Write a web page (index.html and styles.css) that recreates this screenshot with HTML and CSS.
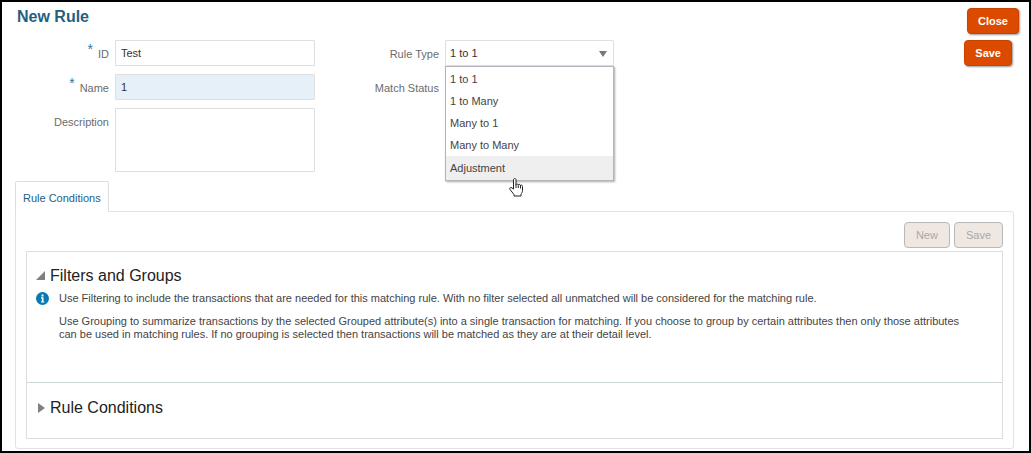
FILE: index.html
```html
<!DOCTYPE html>
<html lang="en">
<head>
<meta charset="utf-8">
<meta name="viewport" content="width=device-width, initial-scale=1">
<title>New Rule</title>
<link rel="stylesheet" href="styles.css">
</head>
<body>
<main class="page">
  <header class="page-header">
    <h1 class="page-title">New Rule</h1>
    <button class="btn btn-primary" type="button">Close</button>
  </header>

  <form class="rule-form">
    <div class="fields">
      <label class="label" for="rule-id"><span class="required">*</span> ID</label>
      <input class="control" id="rule-id" type="text" value="Test">
      <label class="label" for="rule-name"><span class="required">*</span> Name</label>
      <input class="control control-active" id="rule-name" type="text" value="1">
      <label class="label" for="rule-desc">Description</label>
      <textarea class="control control-area" id="rule-desc"></textarea>
    </div>
    <div class="fields fields-type">
      <label class="label" for="rule-type">Rule Type</label>
      <div class="select-wrap">
        <select class="control control-select" id="rule-type">
          <option selected>1 to 1</option>
          <option>1 to Many</option>
          <option>Many to 1</option>
          <option>Many to Many</option>
          <option>Adjustment</option>
        </select>
        <svg class="select-arrow" viewBox="0 0 8 6" aria-hidden="true"><path d="M0 0h8L4 6z"/></svg>
        <ul class="menu" role="listbox" aria-label="Rule Type">
          <li class="menu-item" role="option">1 to 1</li>
          <li class="menu-item" role="option">1 to Many</li>
          <li class="menu-item" role="option">Many to 1</li>
          <li class="menu-item" role="option">Many to Many</li>
          <li class="menu-item menu-item-hover" role="option">Adjustment</li>
        </ul>
        <svg class="pointer" viewBox="0 0 14 19" aria-hidden="true">
          <path d="M4.500 11V2c0-2 2.500-2 2.500 0v5c0-1.500 2.300-1.500 2.300.3 0-1.500 2.200-1.200 2.200.5 0-1.300 2-1 2 .8v4.200c0 1.500-1 2.200-1.500 3.700v1.500H5V16.500L1 11.500c-1-1.500.8-2.700 2-1.500z"/>
          <path d="M7 7v3M9.300 7.500V10M11.500 8v2.500"/>
        </svg>
      </div>
      <span class="label">Match Status</span>
    </div>
    <button class="btn btn-primary btn-save" type="button">Save</button>
  </form>

  <div class="tabs" role="tablist">
    <button class="tab" type="button" role="tab" aria-selected="true">Rule Conditions</button>
  </div>

  <section class="panel">
    <div class="toolbar">
      <button class="btn btn-disabled" type="button" disabled>New</button>
      <button class="btn btn-disabled" type="button" disabled>Save</button>
    </div>
    <div class="sections">
      <section class="section section-filters">
        <h2 class="section-title">
          <svg class="disclosure" viewBox="0 0 10 10" aria-hidden="true"><path d="M9 0v9H0z"/></svg>
          Filters and Groups
        </h2>
        <div class="help">
          <svg class="info" viewBox="0 0 13 13" aria-hidden="true">
            <circle class="info-disc" cx="6.500" cy="6.500" r="6.500"/>
            <path class="info-mark" d="M5.500 2.500h2v2h-2zM5 5.300h2.500V9.500H8.300v1H5v-1h.8V6.300H5z"/>
          </svg>
          <div class="help-text">
            <p class="help-line">Use Filtering to include the transactions that are needed for this matching rule. With no filter selected all unmatched will be considered for the matching rule.</p>
            <p class="help-line">Use Grouping to summarize transactions by the selected Grouped attribute(s) into a single transaction for matching. If you choose to group by certain attributes then only those attributes can be used in matching rules. If no grouping is selected then transactions will be matched as they are at their detail level.</p>
          </div>
        </div>
      </section>
      <section class="section section-rules">
        <h2 class="section-title">
          <svg class="disclosure" viewBox="0 0 10 10" aria-hidden="true"><path d="M2 0l7 5-7 5z"/></svg>
          Rule Conditions
        </h2>
      </section>
    </div>
  </section>
</main>
</body>
</html>
```

FILE: styles.css
```css
* {
  box-sizing: border-box;
}

body {
  margin: 0;
  background: #fff;
  color: #444;
  font-family: "Liberation Sans", Arial, sans-serif;
  font-size: 11px;
}

.page {
  min-height: 100vh;
  border: 2px solid #000;
  padding: 6px 15px 1px 13px;
}

.page-header {
  display: flex;
  justify-content: space-between;
  align-items: flex-start;
  margin-right: -5px;
  padding-left: 2px;
}

.page-title {
  margin: 0;
  color: #25607f;
  font-size: 16px;
  line-height: 18px;
}

.btn {
  height: 26px;
  padding: 0 10px;
  border: 1px solid;
  border-radius: 4px;
  font: 11px "Liberation Sans", Arial, sans-serif;
}

.btn-primary {
  border-color: #c84400;
  background: #dc4a00;
  color: #fff;
  font-weight: bold;
  box-shadow: 1px 1px 2px #999;
}

.btn-save {
  margin-left: auto;
}

.btn-disabled {
  padding: 0 11px;
  border-color: #b8b8b8;
  background: #efe8e2;
  color: #a9a9a6;
}

.rule-form {
  display: flex;
  align-items: flex-start;
  margin-top: 6px;
  padding-right: 2px;
}

.fields {
  display: grid;
  grid-template-columns: 94px 200px;
  column-gap: 6px;
  row-gap: 8px;
}

.fields-type {
  grid-template-columns: 124px 169px;
}

.label {
  padding-top: 7px;
  color: #6c6c6c;
  line-height: 14px;
  text-align: right;
}

.required {
  margin-right: 2px;
  color: #2d7aa8;
  font-size: 14px;
  line-height: 0;
  vertical-align: 4px;
}

.control {
  width: 100%;
  height: 26px;
  padding: 0 5px;
  border: 1px solid #dfdfdf;
  border-radius: 1px;
  background: #fff;
  color: #333;
  font: 11px "Liberation Sans", Arial, sans-serif;
}

.control-active {
  background: #e6f0f8;
}

.control-area {
  display: block;
  height: 64px;
  resize: none;
}

.select-wrap {
  position: relative;
}

.control-select {
  padding: 0 4px;
  appearance: none;
}

.select-arrow {
  position: absolute;
  top: 11px;
  right: 7px;
  width: 8px;
  height: 6px;
  fill: #777;
}

.menu {
  position: absolute;
  z-index: 1;
  top: 26px;
  left: 0;
  width: 100%;
  margin: 0;
  padding: 1px 0 0;
  border: 1px solid #b4b4bc;
  background: #fff;
  box-shadow: 1px 1px 2px #aaa;
  list-style: none;
}

.menu-item {
  padding: 0 4px;
  line-height: 22px;
}

.menu-item:last-child {
  line-height: 24px;
}

.menu-item-hover {
  background: #efefef;
}

.pointer {
  position: absolute;
  z-index: 2;
  top: 138px;
  left: 64px;
  width: 14px;
  height: 19px;
  fill: #fff;
  stroke: #222;
}

.tabs {
  display: flex;
  margin-top: 9px;
}

.tab {
  z-index: 1;
  height: 31px;
  margin-bottom: -1px;
  padding: 2px 7px 0;
  border: 1px solid #dedede;
  border-bottom: 0;
  border-radius: 2px 2px 0 0;
  background: #fff;
  color: #25607f;
  font: 11px "Liberation Sans", Arial, sans-serif;
}

.panel {
  padding: 10px 10px 9px;
  border: 1px solid #e2e2e2;
  border-radius: 0 3px 3px 3px;
}

.toolbar {
  display: flex;
  justify-content: flex-end;
  gap: 4px;
}

.sections {
  margin-top: 3px;
  border: 1px solid #e0dcdc;
}

.section {
  padding: 15px 24px 0 9px;
}

.section-filters {
  min-height: 131px;
  border-bottom: 1px solid #ccd6d8;
}

.section-rules {
  min-height: 55px;
  padding-top: 16px;
}

.section-title {
  display: flex;
  align-items: center;
  gap: 4px;
  margin: 0;
  color: #222;
  font-size: 16px;
  font-weight: normal;
  line-height: 18px;
}

.disclosure {
  width: 10px;
  height: 10px;
  fill: #808080;
}

.help {
  display: flex;
  gap: 10px;
  margin-top: 7px;
}

.info {
  flex: none;
  width: 13px;
  height: 13px;
}

.info-disc {
  fill: #0879b4;
}

.info-mark {
  fill: #fff;
}

.help-line {
  margin: 0 0 10px;
  line-height: 13px;
}
```
